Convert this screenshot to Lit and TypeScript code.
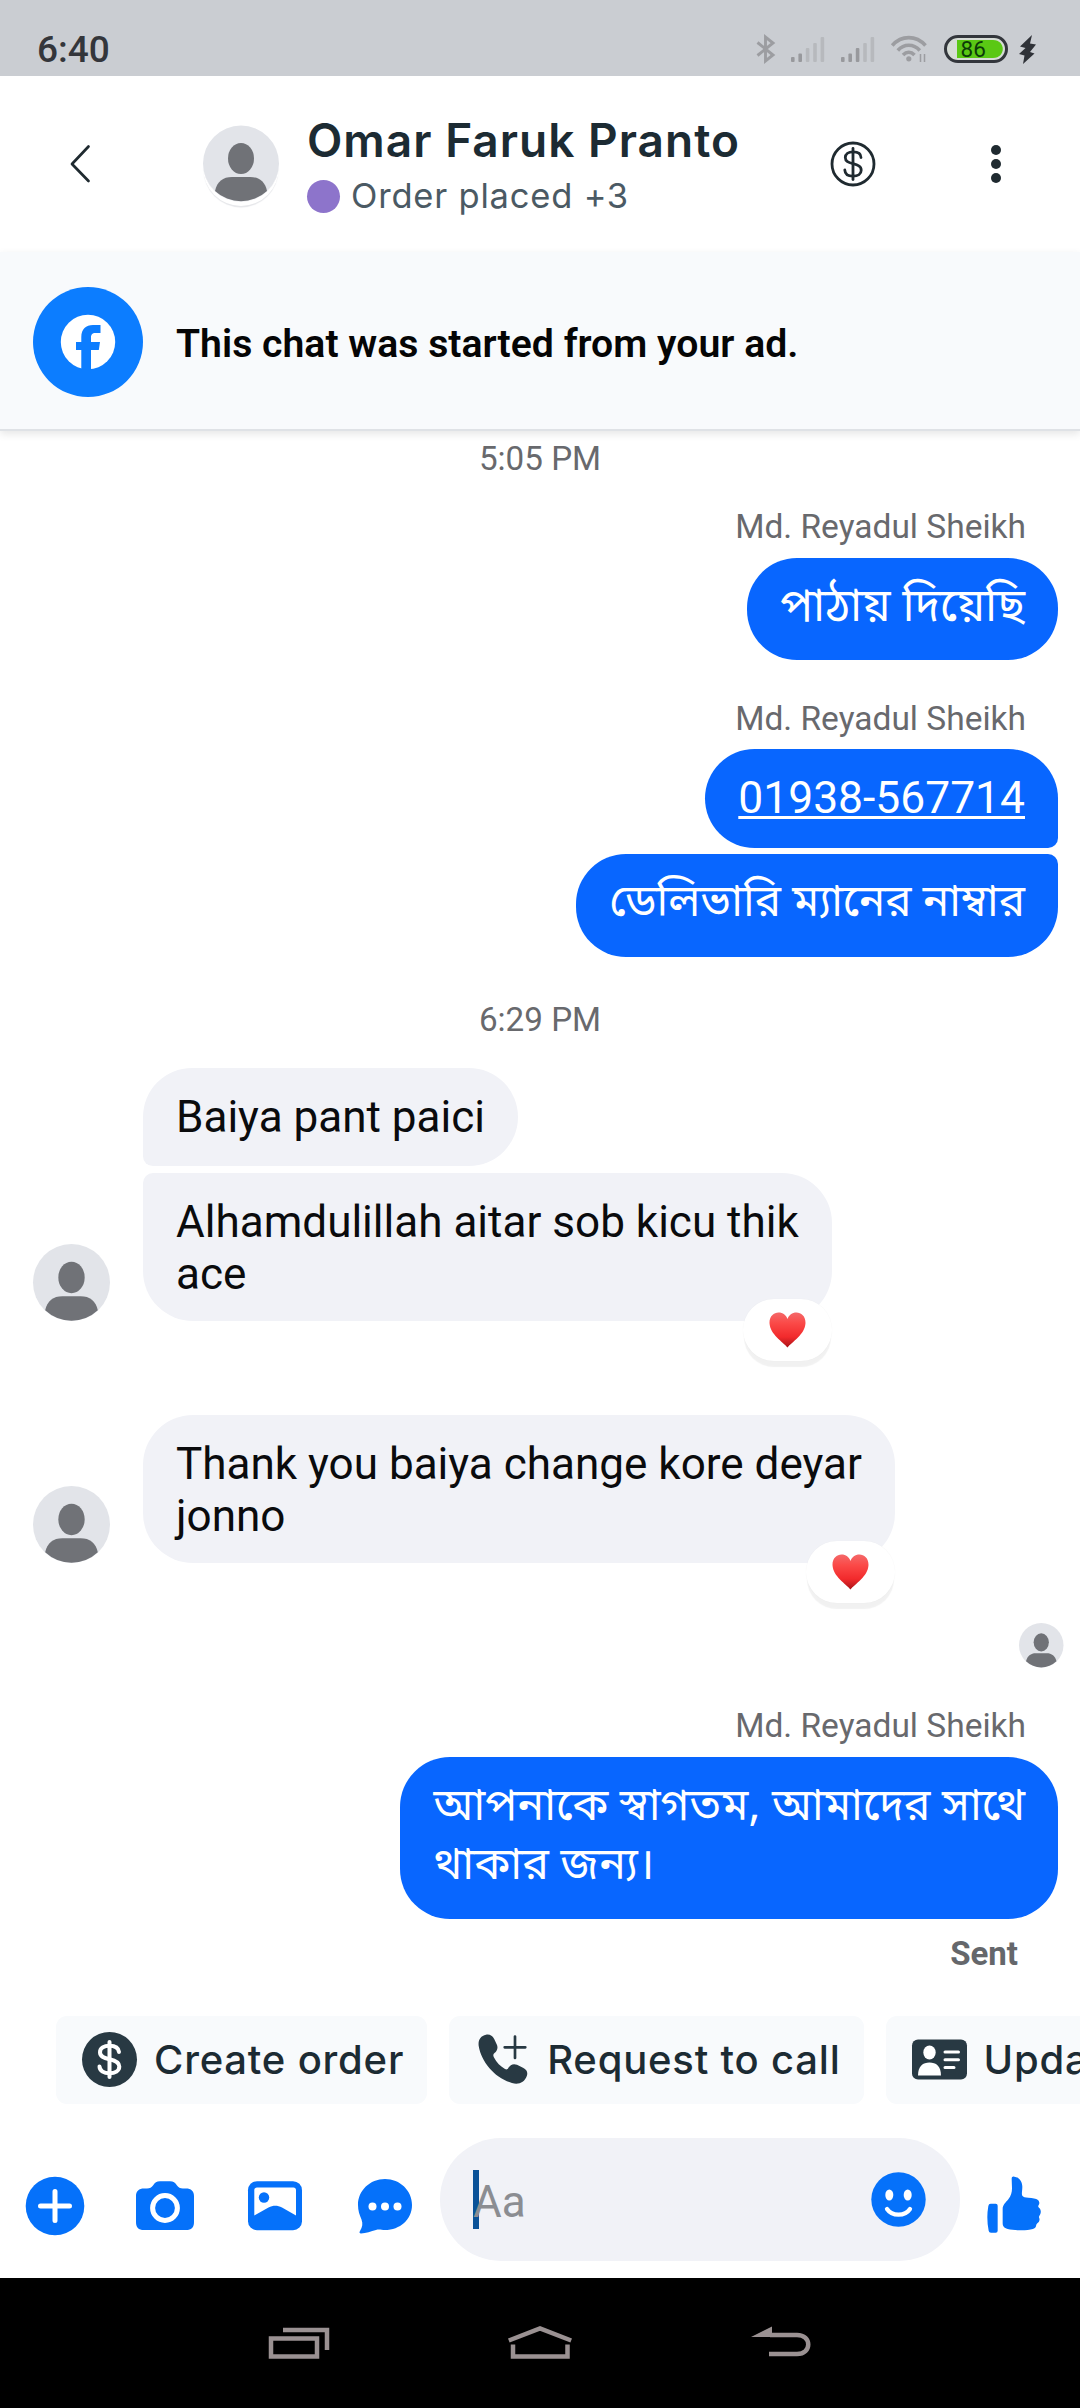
import { LitElement, html, css, svg, nothing } from "lit";
import { classMap } from "lit/directives/class-map.js";

type Row =
  | { kind: "time"; text: string; gap: string }
  | { kind: "name"; text: string; gap: string }
  | { kind: "seen"; gap: string }
  | { kind: "status"; text: string; gap: string }
  | {
      kind: "msg";
      lines: string[];
      gap: string;
      out?: boolean;
      shape: string;
      bn?: string;
      link?: boolean;
      avatar?: boolean;
      heart?: boolean;
    };

const ROWS: Row[] = [
  { kind: "time", text: "5:05 PM", gap: "g-top" },
  { kind: "name", text: "Md. Reyadul Sheikh", gap: "g-28" },
  { kind: "msg", lines: ["পাঠায় দিয়েছি"], gap: "g-name", out: true, shape: "single", bn: "bn-l" },
  { kind: "name", text: "Md. Reyadul Sheikh", gap: "g-39" },
  { kind: "msg", lines: ["01938-567714"], gap: "g-name", out: true, shape: "first", link: true },
  { kind: "msg", lines: ["ডেলিভারি ম্যানের নাম্বার"], gap: "g-run", out: true, shape: "last", bn: "bn-s" },
  { kind: "time", text: "6:29 PM", gap: "g-43" },
  { kind: "msg", lines: ["Baiya pant paici"], gap: "g-28", shape: "first" },
  { kind: "msg", lines: ["Alhamdulillah aitar sob kicu thik", "ace"], gap: "g-run", shape: "last", avatar: true, heart: true },
  { kind: "msg", lines: ["Thank you baiya change kore deyar", "jonno"], gap: "g-94", shape: "single", avatar: true, heart: true },
  { kind: "seen", gap: "g-60" },
  { kind: "name", text: "Md. Reyadul Sheikh", gap: "g-39" },
  { kind: "msg", lines: ["আপনাকে স্বাগতম, আমাদের সাথে", "থাকার জন্য।"], gap: "g-name", out: true, shape: "single", bn: "bn-m" },
  { kind: "status", text: "Sent", gap: "g-15" },
];

const avatar = () => html`<svg class="person" viewBox="0 0 76 76">
  <circle cx="38" cy="38" r="38" fill="#e2e4e9" />
  <ellipse cx="38" cy="33" rx="13" ry="15.5" fill="#707277" />
  <path d="M12 65.500C14 56 20 51.500 29 51.500H47C56 51.500 62 56 64 65.500A38 38 0 0 1 12 65.500Z" fill="#707277" />
</svg>`;

const heart = html`<svg class="heart" viewBox="0 0 37 36">
  <defs>
    <linearGradient id="hg" x1="0" y1="0" x2="0" y2="1">
      <stop offset="0" stop-color="#f4696a" />
      <stop offset=".3" stop-color="#fb4a48" />
      <stop offset=".7" stop-color="#f22a2c" />
      <stop offset="1" stop-color="#a81318" />
    </linearGradient>
  </defs>
  <path d="M18.500 35.500C14 30 1 22.500 .5 11C.3 4 5 .5 9.500 .5C14 .5 17 3 18.500 7C20 3 23 .5 27.500 .5C32 .5 36.700 4 36.500 11C36 22.500 23 30 18.500 35.500Z" fill="url(#hg)" />
</svg>`;

const signal = (strong: number) => html`<svg class="signal" viewBox="0 0 34 26">
  ${[5, 8.5, 14, 19, 25].map(
    (h, i) => svg`<rect x=${i * 7.4} y=${26 - h} width="3.600" height=${h} rx="1" fill=${i < strong ? "#98999d" : "#b7b9bd"} />`
  )}
</svg>`;

class AppRoot extends LitElement {
  static styles = css`
    :host {
      display: block;
      width: 1080px;
      height: 2408px;
      overflow: hidden;
      background: #fff;
      font-family: Roboto, "Noto Sans Bengali", "Noto Sans", sans-serif;
      color: #0a0b0d;
    }
    * { box-sizing: border-box; }
    svg { display: block; flex: none; overflow: visible; }
    .page { display: flex; flex-direction: column; height: 2408px; }

    .status {
      height: 76px;
      flex: none;
      background: #cacdd2;
      display: flex;
      align-items: flex-start;
      justify-content: space-between;
      padding: 0 44px 0 37px;
    }
    .clock { font-size: 37px; font-weight: 500; line-height: 44px; padding-top: 28px; color: #34363b; }
    .tray { display: flex; align-items: center; height: 28px; margin-top: 35px; }
    .bt { width: 19px; height: 28px; margin-right: 16px; }
    .signal { width: 34px; height: 26px; margin-right: 16px; }
    .wifi { width: 36px; height: 26px; margin-right: 17px; }
    .battery { width: 64px; height: 28px; margin-right: 11px; }
    .bolt { width: 17px; height: 29px; }

    .header { height: 176px; flex: none; display: flex; align-items: flex-start; }
    .back { width: 19px; height: 38px; margin: 69px 0 0 71px; }
    .head-avatar {
      width: 76px; height: 77px; margin: 49px 0 0 113px; border-radius: 50%;
      box-shadow: 0 4px 0 0 #fff, 0 6px 1px -.5px #e6e7ea;
    }
    .head-avatar .person { width: 76px; height: 77px; }
    .who { margin: 36px 0 0 28px; width: 512px; font-family: Inter, sans-serif; white-space: nowrap; }
    .title { font-size: 46px; font-weight: 600; line-height: 56px; letter-spacing: 1.020px; color: #1c2b33; }
    .sub { display: flex; align-items: center; margin-top: 6px; font-size: 34.500px; line-height: 44px; letter-spacing: .8px; color: #4b5a64; }
    .dot { width: 33px; height: 33px; border-radius: 50%; background: #8d74cb; margin: 0 11px 0 0; }
    .coin { width: 46px; height: 46px; margin: 65px 0 0 11px; }
    .more { width: 10px; height: 40px; margin: 68px 0 0 115px; }

    .banner {
      height: 179px;
      flex: none;
      background: #f8fafc;
      border-bottom: 2px solid #dfe2e6;
      box-shadow: 0 3px 8px rgba(0, 0, 0, .1);
      display: flex;
      align-items: center;
      padding: 0 33px;
      font-size: 39.200px;
      font-weight: 600;
      color: #050505;
      white-space: nowrap;
    }
    .banner span { padding-top: 6px; }
    .fb { width: 110px; height: 110px; margin: 2px 33px 0 0; }

    .thread { flex: none; height: 1584.700px; display: flex; flex-direction: column; }
    .g-top { margin-top: 8px; }
    .g-28 { margin-top: 28px; }
    .g-39 { margin-top: 38.700px; }
    .g-name { margin-top: 10.500px; }
    .g-run { margin-top: 6.500px; }
    .g-43 { margin-top: 42.700px; }
    .g-94 { margin-top: 94px; }
    .g-60 { margin-top: 60.500px; }
    .g-15 { margin-top: 14.700px; }

    .time { text-align: center; font-size: 33.200px; line-height: 40px; color: #68696d; }
    .name { text-align: right; padding-right: 54px; font-size: 33.500px; line-height: 40px; color: #68696d; }
    .sent { text-align: right; padding-right: 62px; font-size: 33px; font-weight: 700; line-height: 40px; color: #65676b; }
    .seen { align-self: flex-end; width: 44.500px; height: 44.500px; margin-right: 17px; }
    .seen .person { width: 100%; height: 100%; }

    .row { display: flex; align-items: flex-end; padding: 0 22px 0 33px; }
    .row.out { justify-content: flex-end; }
    .side { width: 110px; flex: none; }
    .side .person { width: 77px; height: 77px; }
    .bubble {
      position: relative;
      padding: 23px 33px 0;
      height: 98.500px;
      border-radius: 50px;
      background: #f1f2f7;
      font-size: 44.050px;
      line-height: 52px;
      white-space: nowrap;
    }
    .two .bubble { height: 148px; }
    .first .bubble { border-bottom-left-radius: 10px; }
    .last .bubble { border-top-left-radius: 10px; }
    .out .bubble { background: #0866ff; color: #fff; font-size: 44.400px; }
    .out.first .bubble { border-radius: 50px 50px 10px 50px; }
    .out.last .bubble { border-radius: 50px 10px 50px 50px; }
    .bn .bubble { font-family: "Noto Sans Bengali", Roboto, sans-serif; height: 102.700px; line-height: 59px; padding-top: 22px; }
    .bn.two .bubble { height: 162px; }
    .bn-l .bubble { font-size: 45.700px; }
    .bn-m .bubble { font-size: 44.700px; }
    .bn-s .bubble { font-size: 44px; }
    .link { text-decoration: underline; text-decoration-thickness: 2.500px; text-underline-offset: 3px; text-decoration-skip-ink: none; }
    .react {
      position: absolute;
      right: 0;
      bottom: -40px;
      width: 89px;
      height: 62px;
      border-radius: 31px;
      background: #fff;
      box-shadow: 0 7px 1px -1px rgba(0, 0, 0, .055), 0 0 1px rgba(0, 0, 0, .06);
      display: flex;
      align-items: center;
      justify-content: center;
    }
    .heart { width: 37px; height: 36px; }

    .chips { flex: none; display: flex; gap: 22px; padding-left: 56px; height: 88.600px; overflow: hidden; }
    .chip {
      flex: none;
      display: flex;
      align-items: center;
      height: 88.600px;
      border-radius: 11px;
      background: #f8fafc;
      padding: 0 23px 0 26px;
      font-family: Inter, sans-serif;
      font-size: 40px;
      font-weight: 500;
      letter-spacing: .8px;
      color: #1c2b33;
      white-space: nowrap;
    }
    .chip svg { width: 55px; height: 55px; margin-right: 17px; }

    .composer { flex: none; display: flex; margin-top: 33.700px; height: 123.500px; }
    .tool { width: 110px; flex: none; display: flex; align-items: center; justify-content: center; padding-top: 12px; }
    .tool svg { width: 60px; height: 60px; }
    .field {
      width: 520px;
      flex: none;
      border-radius: 61px;
      background: #f1f2f7;
      display: flex;
      align-items: center;
      padding: 0 34px 0 33px;
    }
    .caret { width: 6px; height: 59px; background: #0a5298; }
    .hint { flex: 1; font-size: 44px; line-height: 52px; margin-left: -6px; padding-top: 4px; color: #8b8d92; }
    .smile { width: 55px; height: 55px; }
    .thumb { width: 54px; height: 56px; margin: 39px 0 0 27px; }

    .nav {
      height: 130px;
      margin-top: auto;
      flex: none;
      background: #000;
      display: grid;
      grid-template-columns: repeat(3, 241px);
      justify-content: center;
      align-items: center;
      justify-items: center;
    }
    .nav svg { height: 34px; }
  `;

  private row(r: Row) {
    if (r.kind === "time") return html`<div class="time ${r.gap}">${r.text}</div>`;
    if (r.kind === "name") return html`<div class="name ${r.gap}">${r.text}</div>`;
    if (r.kind === "status") return html`<div class="sent ${r.gap}">${r.text}</div>`;
    if (r.kind === "seen") return html`<div class="seen ${r.gap}">${avatar()}</div>`;
    const cls: Record<string, boolean> = { row: true, out: !!r.out, two: r.lines.length > 1, bn: !!r.bn };
    cls[r.gap] = true;
    cls[r.shape] = true;
    if (r.bn) cls[r.bn] = true;
    return html`<div class=${classMap(cls)}>
      ${r.out ? nothing : html`<div class="side">${r.avatar ? avatar() : nothing}</div>`}
      <div class="bubble">
        ${r.lines.map((l) => html`<div>${r.link ? html`<span class="link">${l}</span>` : l}</div>`)}
        ${r.heart ? html`<div class="react">${heart}</div>` : nothing}
      </div>
    </div>`;
  }

  render() {
    return html`<div class="page">
      <div class="status">
        <div class="clock">6:40</div>
        <div class="tray">
          <svg class="bt" viewBox="0 0 19 28" fill="none" stroke="#9c9da1" stroke-width="2.900"><path d="M1.500 7.500L17 20L9.500 26V2L17 8L1.500 20.500" /></svg>
          ${signal(2)} ${signal(3)}
          <svg class="wifi" viewBox="0 0 36 26" fill="none" stroke="#9c9da1" stroke-width="3.600">
            <path d="M1.200 9.500C10.500 -1 25 -1 34.500 9.500" />
            <path d="M6.800 14.500C13 7.500 22.500 7.500 28.800 14.500" />
            <path d="M12 19C15.500 15.500 20 15.500 23.500 19" />
            <circle cx="17.800" cy="22.800" r="2.600" fill="#9c9da1" stroke="none" />
            <path d="M29.500 18V26M33.500 18V26" stroke-width="1.500" />
          </svg>
          <svg class="battery" viewBox="0 0 64 28">
            <rect x="1.500" y="1.500" width="61" height="25" rx="12.500" fill="#d6dcd6" stroke="#33363c" stroke-width="3" />
            <path d="M13 5H49C62 5 62 23 49 23H13Z" fill="#5ac814" />
            <text x="16.500" y="22.200" font-family="Roboto, sans-serif" font-size="22.500" font-weight="400" fill="#0c3b08">86</text>
          </svg>
          <svg class="bolt" viewBox="0 0 17 29"><path d="M13 0L1 11.500L6.500 13L0 19L5.500 20.500L4 29L15.500 18.500L11 17L17 9.500L11 8.500Z" fill="#2f3238" /></svg>
        </div>
      </div>

      <div class="header">
        <svg class="back" viewBox="0 0 19 38" fill="none" stroke="#1f2a30" stroke-width="2.700" stroke-linecap="round" stroke-linejoin="round"><path d="M17.500 1.500L1 19L17.500 36" /></svg>
        <div class="head-avatar">${avatar()}</div>
        <div class="who">
          <div class="title">Omar Faruk Pranto</div>
          <div class="sub"><span class="dot"></span>Order placed +3</div>
        </div>
        <svg class="coin" viewBox="0 0 46 46" fill="none" stroke="#1f2a30" stroke-width="2.800" stroke-linecap="round">
          <circle cx="23" cy="23" r="21" />
          <path d="M23 7.500V38.500" />
          <path d="M31 16.500C31 12.500 27.500 10.800 23 10.800C18.500 10.800 15.300 13 15.300 16.600C15.300 20.500 18.500 21.500 23 22.700C27.500 23.900 31.200 25 31.200 29.200C31.200 33 27.800 35.200 23 35.200C18.200 35.200 15 33 14.800 29" />
        </svg>
        <svg class="more" viewBox="0 0 10 40" fill="#1f2a30"><circle cx="5" cy="6" r="5" /><circle cx="5" cy="20" r="5" /><circle cx="5" cy="34" r="5" /></svg>
      </div>

      <div class="banner">
        <svg class="fb" viewBox="0 0 110 110">
          <circle cx="55" cy="55" r="55" fill="#0c7dff" />
          <circle cx="55" cy="55" r="27.200" fill="#fff" />
          <path d="M48.300 84V63H43V55H48.300V50C48.300 42 53 38 60 38H67.500V46H62.500C59 46 58 48 58 50.500V55H67L65.800 63H58V84Z" fill="#0c7dff" />
        </svg>
        <span>This chat was started from your ad.</span>
      </div>

      <div class="thread">${ROWS.map((r) => this.row(r))}</div>

      <div class="chips">
        <div class="chip">
          <svg viewBox="0 0 55 55">
            <circle cx="27.500" cy="27.500" r="27.500" fill="#283943" />
            <g fill="none" stroke="#fff" stroke-width="4" stroke-linecap="round">
              <path d="M27.500 10V45" />
              <path d="M37 20C36.500 15.500 32.500 13.700 27.500 13.700C22 13.700 18 16 18 20.300C18 24.500 21.500 26 27.500 27.300C33.500 28.600 37.300 30.300 37.300 34.600C37.300 39 33 41.300 27.500 41.300C22 41.300 17.800 39 17.500 34.500" />
            </g>
          </svg>Create order
        </div>
        <div class="chip">
          <svg viewBox="0 0 55 55">
            <path d="M11 3.200C14.500 2.500 17.500 4 19.200 7.500L22 13.500C23.200 16.500 22 19.500 19.500 21.500C18 22.700 18 24 19 26C21.500 31 25.500 35 30 37.500C31.500 38.300 32.500 38 33.300 36.500C35.300 33 38.500 31.800 42 33.300L48 36.200C52 38.300 53 41 51.800 44.500C49.500 51 43.500 53.500 37 51.500C20 46.500 6.500 31 3.700 14.500C2.900 8.500 5.500 4.300 11 3.200Z" fill="#283943" transform="translate(0 -.5)" />
            <path d="M40 4.500V26M29.700 15.300H50.300" stroke="#283943" stroke-width="2.700" stroke-linecap="round" />
          </svg>Request to call
        </div>
        <div class="chip">
          <svg viewBox="0 0 55 55">
            <rect x="0" y="7.500" width="55" height="40" rx="6" fill="#283943" />
            <ellipse cx="17.500" cy="20.500" rx="6.200" ry="7" fill="#fff" />
            <path d="M6 43.500C6 34 11 30.500 17.500 30.500C24 30.500 29 34 29 43.500Z" fill="#fff" />
            <path d="M33 20H46.500M33 27.800H46.500M33 35.500H42" stroke="#fff" stroke-width="3" stroke-linecap="round" />
          </svg>Upda
        </div>
      </div>

      <div class="composer">
        <div class="tool">
          <svg viewBox="0 0 60 60"><circle cx="30" cy="30" r="29.300" fill="#0571fa" /><path d="M30 15.500V44.500M15.500 30H44.500" stroke="#fff" stroke-width="5" stroke-linecap="round" /></svg>
        </div>
        <div class="tool">
          <svg viewBox="0 0 60 60">
            <path d="M9 12.500H12C15 12.500 16.500 11.500 18 9.500C20 6.500 21.500 5.200 25 5.200H35C38.500 5.200 40 6.500 42 9.500C43.500 11.500 45 12.500 48 12.500H51C56 12.500 59 15 59 20V46C59 51.500 56.500 54 51 54H9C3.500 54 1 51.500 1 46V20C1 15 4 12.500 9 12.500Z" fill="#0571fa" />
            <circle cx="30" cy="32" r="12.400" fill="none" stroke="#fff" stroke-width="5" />
          </svg>
        </div>
        <div class="tool">
          <svg viewBox="0 0 60 60">
            <rect x="3" y="5.200" width="54" height="49" rx="9" fill="#0571fa" />
            <path d="M12 11.500H48.500C50 11.500 51 12.500 51 14V39.500L37 31.500C32.500 29 28 29 23.500 31.500L9.300 39.500V14C9.300 12.500 10.500 11.500 12 11.500Z" fill="#fff" />
            <circle cx="19" cy="21.500" r="5.200" fill="#0571fa" />
          </svg>
        </div>
        <div class="tool">
          <svg viewBox="0 0 60 60">
            <path d="M30 3C45 3 57 14.500 57 29C57 43.500 45 54 30 54C26.500 54 24 53 21 54C16 55.500 11 57 6 57.500C4.500 57.500 4 56.500 5 55C7.500 51 8 47.500 6.500 43.500C4.500 39 3 34.500 3 29C3 14.500 15 3 30 3Z" fill="#0571fa" />
            <circle cx="17.500" cy="30.500" r="4" fill="#fff" /><circle cx="30" cy="30.500" r="4" fill="#fff" /><circle cx="42.500" cy="30.500" r="4" fill="#fff" />
          </svg>
        </div>
        <div class="field">
          <span class="caret"></span>
          <span class="hint">Aa</span>
          <svg class="smile" viewBox="0 0 55 55">
            <circle cx="27.500" cy="27.500" r="27.200" fill="#0571fa" />
            <ellipse cx="18.300" cy="23" rx="4" ry="5.500" fill="#fff" /><ellipse cx="36.700" cy="23" rx="4" ry="5.500" fill="#fff" />
            <path d="M16 37C21 44.500 34 44.500 39 37" fill="none" stroke="#fff" stroke-width="4.200" stroke-linecap="round" />
          </svg>
        </div>
        <svg class="thumb" viewBox="0 0 54 56">
          <g transform="translate(-27 -17) scale(.33333)" fill="#0571fa">
            <path d="M92 131H107Q113 131 113 137V212Q113 218 107 218H93Q87 218 86 212Q82 195 82 172Q82 155 85 138Q86 131 92 131Z" />
            <path d="M155 56C155 51 158 49 163 50C178 52 187 65 187 80C187 92 184 102 187 107C189 111 196 112 205 113C218 114 228 115 234 120C239 125 239 131 236 135C234 138 234 140 237 143C243 148 244 158 240 164C237 168 236 171 238 175C240 181 237 187 232 190C229 193 229 195 228 199C225 207 215 209 203 210C186 212 160 211 143 207C132 204 128 199 128 190V148C128 134 137 128 145 118C153 108 156 98 156 85Z" />
          </g>
        </svg>
      </div>

      <div class="nav">
        <svg width="60" viewBox="0 0 60 34" fill="none" stroke="#9a9192" stroke-width="4.500"><rect x="2" y="12.500" width="46" height="18" /><path d="M14 4H58V24" /></svg>
        <svg width="64" viewBox="0 0 64 34" fill="none" stroke="#9a9192" stroke-width="4.500"><path d="M.8 14.500L32 2.500L63.200 14.500" /><path d="M5 18.500V30.500H59.500V18.500" /></svg>
        <svg width="60" viewBox="0 0 60 34" fill="none" stroke="#9a9192" stroke-width="4.500"><path d="M19 9H46C61 9 61 28 46 28H18" /><path d="M0 11L21 .5V11Z" fill="#9a9192" stroke="none" /></svg>
      </div>
    </div>`;
  }
}
customElements.define("app-root", AppRoot);
